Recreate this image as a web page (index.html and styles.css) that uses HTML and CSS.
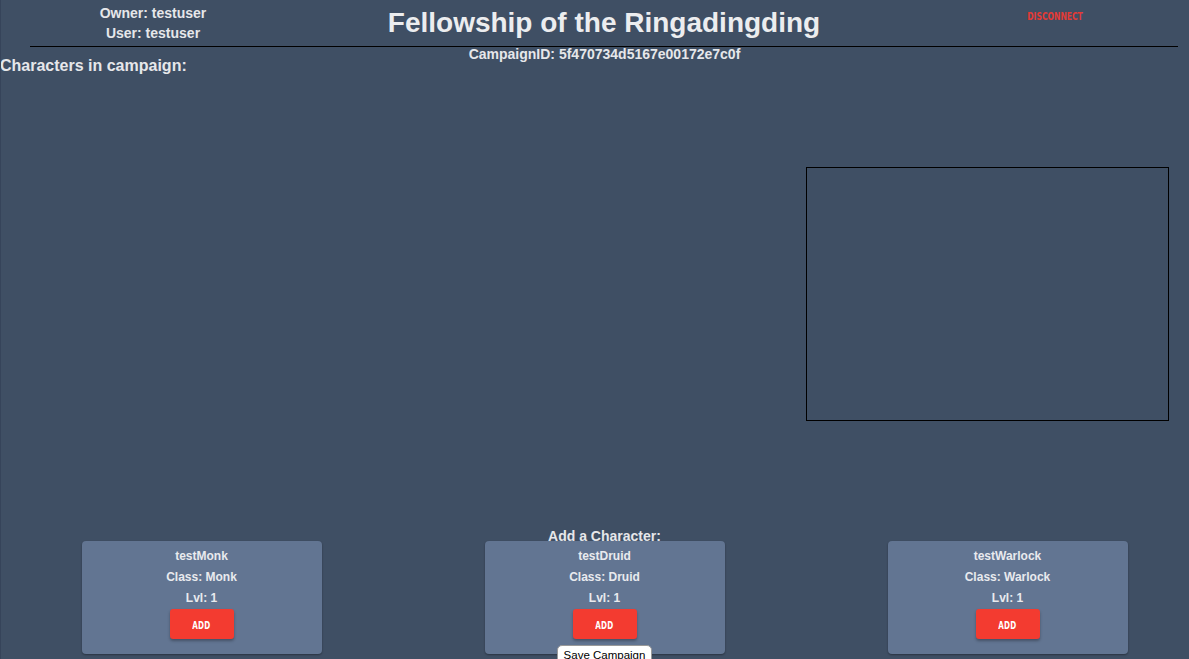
FILE: index.html
```html
<!DOCTYPE html>
<html>
<head>
<meta charset="utf-8">
<link rel="stylesheet" href="styles.css">
</head>
<body>
<div class="page">
  <header class="header">
    <div class="users">
      <div class="user-line">Owner: testuser</div>
      <div class="user-line">User: testuser</div>
    </div>
    <h1 class="title">Fellowship of the Ringadingding</h1>
    <div class="actions"><span class="disconnect">DISCONNECT</span></div>
  </header>
  <div class="rule"></div>
  <div class="campaign-id">CampaignID: 5f470734d5167e00172e7c0f</div>
  <div class="section-title">Characters in campaign:</div>
  <div class="main">
    <div class="party"></div>
    <div class="map-box"></div>
  </div>
  <div class="add-title">Add a Character:</div>
  <div class="cards">
    <div class="card">
      <div class="card-line">testMonk</div>
      <div class="card-line">Class: Monk</div>
      <div class="card-line">Lvl: 1</div>
      <button class="add-btn"><span class="add-label">ADD</span></button>
    </div>
    <div class="card">
      <div class="card-line">testDruid</div>
      <div class="card-line">Class: Druid</div>
      <div class="card-line">Lvl: 1</div>
      <button class="add-btn"><span class="add-label">ADD</span></button>
    </div>
    <div class="card">
      <div class="card-line">testWarlock</div>
      <div class="card-line">Class: Warlock</div>
      <div class="card-line">Lvl: 1</div>
      <button class="add-btn"><span class="add-label">ADD</span></button>
    </div>
  </div>
  <button class="save-btn">Save Campaign</button>
</div>
</body>
</html>
```
FILE: styles.css
```css
html, body {
  margin: 0;
  padding: 0;
  background: #3f4f64;
  overflow: hidden;
}
body {
  font-family: "Liberation Sans", Arial, sans-serif;
  color: #e6e7ea;
  width: 1189px;
  height: 659px;
  border-left: 1px solid #36445a;
  box-sizing: border-box;
}
.page {
  position: relative;
  width: 1209px;
  margin-left: -1px;
  height: 659px;
}
.header {
  display: grid;
  grid-template-columns: 306px 596px 307px;
  height: 46px;
}
.users {
  padding-top: 3px;
  text-align: center;
}
.user-line {
  font-size: 14px;
  font-weight: bold;
  line-height: 20px;
}
.title {
  margin: 0;
  padding-top: 6px;
  text-align: center;
  font-size: 28px;
  font-weight: bold;
  line-height: 34px;
  color: #ecedef;
}
.actions {
  text-align: center;
  padding-top: 6px;
}
.disconnect {
  display: inline-block;
  font-family: "DejaVu Sans Condensed", "DejaVu Sans", sans-serif;
  font-stretch: condensed;
  font-weight: bold;
  font-size: 11px;
  color: #e53a35;
  transform: scaleX(0.77);
}
.rule {
  margin-left: 30px;
  width: 1148px;
  height: 1px;
  background: #000;
}
.campaign-id {
  width: 1209px;
  text-align: center;
  font-size: 14px;
  font-weight: bold;
  line-height: 14px;
}
.section-title {
  font-size: 16px;
  font-weight: bold;
  line-height: 18px;
  margin-top: -4px;
}
.main {
  display: flex;
  width: 1189px;
  height: 455px;
}
.party {
  flex: 1;
}
.map-box {
  width: 361px;
  height: 252px;
  margin-top: 92px;
  margin-right: 20px;
  border: 1px solid #000;
}
.add-title {
  text-align: center;
  font-size: 14px;
  font-weight: bold;
  line-height: 16px;
  margin-top: -2px;
  height: 13px;
}
.cards {
  display: grid;
  grid-template-columns: repeat(3, 403px);
  justify-items: center;
}
.card {
  width: 240px;
  height: 113px;
  box-sizing: border-box;
  padding-top: 5px;
  background: #627592;
  border-radius: 4px;
  box-shadow: 0 1px 2px rgba(0,0,0,0.35);
  text-align: center;
}
.card-line {
  font-size: 12px;
  font-weight: bold;
  line-height: 21px;
  color: #e9eaee;
}
.add-btn {
  display: block;
  margin: 0 auto;
  width: 64px;
  height: 30px;
  border: none;
  border-radius: 3px;
  background: #f33b30;
  box-shadow: 0 2px 3px rgba(0,0,0,0.3);
  padding: 0;
}
.add-label {
  display: inline-block;
  color: #fff;
  font-family: "DejaVu Sans Condensed", "DejaVu Sans", sans-serif;
  font-stretch: condensed;
  font-weight: bold;
  font-size: 10px;
  letter-spacing: 0.3px;
  transform: scaleX(0.8);
}
.save-btn {
  position: absolute;
  left: 557px;
  top: 645px;
  width: 95px;
  height: 20px;
  padding: 0;
  background: #fff;
  border: 1px solid #999;
  border-radius: 5px;
  font-family: "Liberation Sans", Arial, sans-serif;
  font-size: 11.5px;
  color: #000;
  line-height: 16px;
  text-align: center;
}
```
